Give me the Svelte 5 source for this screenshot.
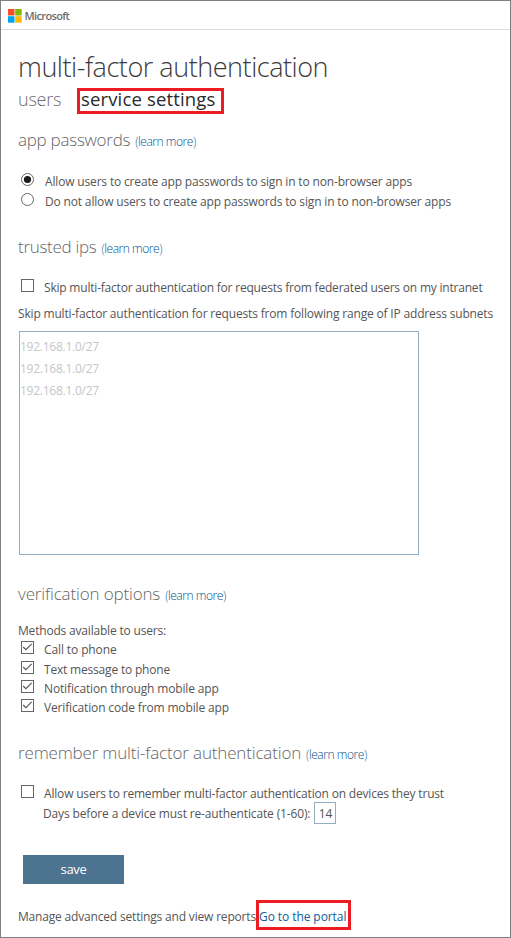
<script>
  const methods = [
    { label: 'Call to phone', spacing: -0.11 },
    { label: 'Text message to phone', spacing: -0.19 },
    { label: 'Notification through mobile app', spacing: -0.14 },
    { label: 'Verification code from mobile app', spacing: -0.15 }
  ];
  const ranges = ['192.168.1.0/27', '192.168.1.0/27', '192.168.1.0/27'];
</script>

{#snippet check(on)}
  <svg class="mark" width="13" height="13" viewBox="0 0 13 13">
    <rect x="0.5" y="0.5" width="12" height="12" fill="#fff" stroke="#666" />
    {#if on}<path d="M2.2 6 4.9 8.7 10.7 2.9" fill="none" stroke="#555" stroke-width="1.1" />{/if}
  </svg>
{/snippet}

{#snippet radio(on)}
  <svg class="mark" width="13" height="13" viewBox="0 0 13 13">
    <circle cx="6.5" cy="6.5" r="6" fill="#fff" stroke="#666" />
    {#if on}<circle cx="6.5" cy="6.5" r="3.6" fill="#1c1c1c" />{/if}
  </svg>
{/snippet}

{#snippet learn()}
  <span class="learn">(<a href="#learn">learn more</a>)</span>
{/snippet}

<div class="page">
  <header>
    <svg width="14" height="14" viewBox="0 0 14 14">
      <path fill="#f25022" d="M0 0h6.5v6.5H0z" /><path fill="#7fba00" d="M7.2 0h6.5v6.5H7.2z" />
      <path fill="#00a4ef" d="M0 7.2h6.5v6.5H0z" /><path fill="#ffb900" d="M7.2 7.2h6.5v6.5H7.2z" />
    </svg>
    <span class="brand">Microsoft</span>
  </header>

  <main>
    <h1>multi-factor authentication</h1>
    <nav>
      <span class="users">users</span>
      <span class="current">service settings</span>
    </nav>

    <h2 class="app">app passwords{@render learn()}</h2>
    <div class="row radio first">{@render radio(true)}<span>Allow users to create app passwords to sign in to non-browser apps</span></div>
    <div class="row radio">{@render radio(false)}<span>Do not allow users to create app passwords to sign in to non-browser apps</span></div>

    <h2 class="ips">trusted ips{@render learn()}</h2>
    <div class="row skip">{@render check(false)}<span>Skip multi-factor authentication for requests from federated users on my intranet</span></div>
    <p class="subnets">Skip multi-factor authentication for requests from following range of IP address subnets</p>
    <div class="ranges">
      {#each ranges as range}<div>{range}</div>{/each}
    </div>

    <h2 class="verify">verification options{@render learn()}</h2>
    <p class="available">Methods available to users:</p>
    {#each methods as method}
      <div class="row method">{@render check(true)}<span style="letter-spacing: {method.spacing}px">{method.label}</span></div>
    {/each}

    <h2 class="remember">remember multi-factor authentication{@render learn()}</h2>
    <div class="row trust">{@render check(false)}<span>Allow users to remember multi-factor authentication on devices they trust</span></div>
    <div class="days"><span>Days before a device must re-authenticate (1-60):</span><div class="num">14</div></div>

    <button>save</button>
    <div class="foot"><span>Manage advanced settings and view reports</span><a class="portal" href="#portal">Go to the portal</a></div>
  </main>
</div>

<style>
  :global(body) { background: #fff; }
  .page {
    box-sizing: border-box; width: 511px; height: 938px; overflow: hidden;
    border: 1px solid #7f7f7f; background: #fff; color: #555;
    font: 12px/22px "Open Sans", "Noto Sans", sans-serif; white-space: nowrap;
  }
  header { display: flex; box-sizing: border-box; height: 29px; padding: 7.6px 0 0 7.2px; border-bottom: 1px solid #dcdcdc; }
  header svg { flex: none; }
  .brand { margin-left: 2.4px; color: #6e6e6e; font-size: 11px; font-weight: 600; line-height: 13px; letter-spacing: -0.65px; }
  main { padding-left: 17px; }
  h1 { height: 40px; margin: 16px 0 0; color: #3c3c3c; font-size: 27px; font-weight: 300; line-height: 42px; letter-spacing: -0.46px; }
  nav { display: flex; height: 28px; align-items: flex-end; }
  .users { width: 59px; height: 28px; color: #6e6e6e; font-size: 18px; font-weight: 300; line-height: 27px; letter-spacing: -0.25px; }
  .current { box-sizing: border-box; width: 147px; height: 26px; padding-left: 1px; border: 3px solid #ed1c24; color: #2a2a2a; font-size: 18.5px; line-height: 15px; letter-spacing: 0.15px; }
  h2 { height: 24px; color: #666; font-size: 17px; font-weight: 300; line-height: 26px; letter-spacing: -0.26px; }
  .app { margin: 13px 0 0; }
  .ips { margin: 23px 0 0; letter-spacing: -0.3px; }
  .verify { margin: 26px 0 0; letter-spacing: -0.15px; }
  .remember { margin: 24px 0 0; letter-spacing: -0.16px; }
  .learn { margin-left: 5px; color: #2a70a2; font-size: 12px; letter-spacing: -0.45px; }
  a { color: #115c94; text-decoration: none; }
  .learn a { color: #00508c; }
  .row { display: flex; height: 20px; padding-left: 3px; }
  .mark { flex: none; margin: 2px 10px 0 0; }
  .radio { letter-spacing: -0.163px; }
  .radio .mark { margin-right: 11px; }
  .first { margin-top: 20px; }
  .skip { margin-top: 19px; letter-spacing: -0.205px; }
  p { margin: 0; height: 20px; }
  .subnets { margin-top: 6px; letter-spacing: -0.175px; }
  .ranges { box-sizing: border-box; width: 400px; height: 224px; margin: 8px 0 0 1px; padding: 4px 0 0; border: 1px solid #93adc4; color: #c6c6c6; line-height: 22px; letter-spacing: -0.25px; }
  .available { margin-top: 15px; height: 19px; letter-spacing: -0.19px; }
  .method { height: 19px; }
  .available + .method { height: 20px; }
  .trust { margin-top: 19px; height: 19px; letter-spacing: -0.185px; }
  .days { display: flex; height: 22px; padding-left: 25px; line-height: 24px; letter-spacing: -0.14px; }
  .days span { width: 271px; }
  .num { box-sizing: border-box; width: 22px; height: 22px; padding-left: 1px; border: 1px solid #93adc4; line-height: 22px; text-align: center; }
  button { display: block; width: 101px; height: 29px; margin: 31px 0 0 5px; padding: 0; border: 0; background: #4c7390; color: #fff; font: 13px/29px "Open Sans", "Noto Sans", sans-serif; letter-spacing: -0.3px; }
  .foot { display: flex; height: 30px; margin-top: 16px; line-height: 34px; letter-spacing: -0.18px; }
  .foot span { width: 238px; }
  .portal { box-sizing: border-box; width: 95px; height: 30px; border: 3px solid #ed1c24; line-height: 28px; letter-spacing: -0.08px; }
</style>
